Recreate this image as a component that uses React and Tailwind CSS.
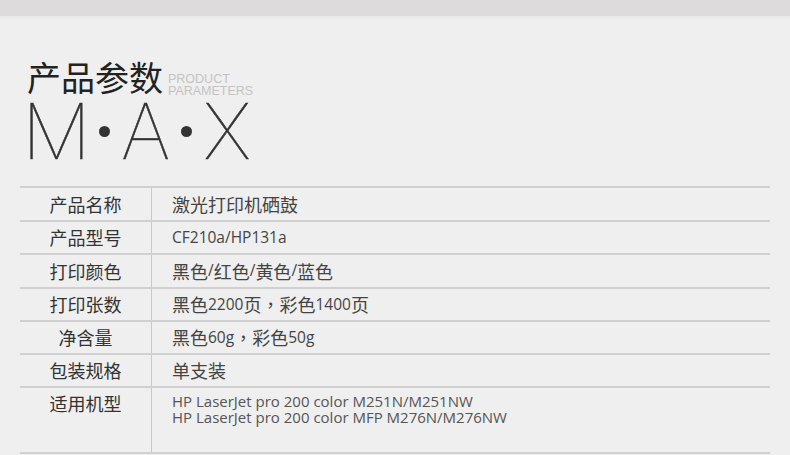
const rows = [
  { label: "产品名称", value: "激光打印机硒鼓", h: "h-[34px]" },
  { label: "产品型号", value: "CF210a/HP131a", h: "h-[33px]" },
  { label: "打印颜色", value: "黑色/红色/黄色/蓝色", h: "h-[34px]" },
  { label: "打印张数", value: "黑色2200页，彩色1400页", h: "h-[33px]" },
  { label: "净含量", value: "黑色60g，彩色50g", h: "h-[33px]" },
  { label: "包装规格", value: "单支装", h: "h-[33px]" },
];

const cjk = "font-['Noto_Sans_CJK_SC',sans-serif]";

// latin runs in the value column are set smaller, like the original page font
function Value({ text }) {
  const parts = text.split(/([A-Za-z0-9/]+|，)/).filter(Boolean);
  return parts.map((p, i) => {
    if (p === "，")
      return (
        <span key={i} className="font-['Noto_Sans_CJK_TC',sans-serif]">
          {p}
        </span>
      );
    if (/^[A-Za-z0-9/]+$/.test(p))
      return (
        <span key={i} className="font-['Open_Sans',sans-serif] text-[15.5px]">
          {p}
        </span>
      );
    return <span key={i}>{p}</span>;
  });
}

export default function App() {
  return (
    <div className="w-[790px] h-[455px] overflow-hidden bg-[#efefef]">
      <div className="h-4 bg-[#dddbdc]" />
      <div className="h-[6px] bg-gradient-to-b from-[#e9e8e8] to-[#efefef]" />

      <div className="pl-[27px] pt-[38px]">
        <div className="flex items-end gap-[5px]">
          <h1 className={`${cjk} text-[34px] leading-none font-normal text-[#222]`}>
            产品参数
          </h1>
          <div className="mb-[-3px] font-['Liberation_Sans',sans-serif] text-[12.5px] leading-[12px] text-[#c3c3c3]">
            <div>PRODUCT</div>
            <div>PARAMETERS</div>
          </div>
        </div>

        <div className="ml-[-5px] mt-[-1px] flex items-center font-['Inter',sans-serif] font-thin text-[77px] leading-none text-[#333] [-webkit-text-stroke:0.5px_#333]">
          <span>M</span>
          <span className="ml-[8px] mr-[11px] block w-[11px] h-[11px] rounded-full bg-[#333]" />
          <span>A</span>
          <span className="ml-[11px] mr-[11px] block w-[11px] h-[11px] rounded-full bg-[#333]" />
          <span>X</span>
        </div>
      </div>

      <div className={`mx-[20px] mt-[16px] ${cjk}`}>
        {rows.map((r) => (
          <div key={r.label} className={`${r.h} flex border-t-2 border-[#d0d0d0]`}>
            <div className="w-[132px] flex items-center justify-center border-r border-[#c9c9c9] text-[18px] text-[#333]">
              {r.label}
            </div>
            <div className="flex items-center pl-[20px] text-[18px] text-[#444]">
              <Value text={r.value} />
            </div>
          </div>
        ))}
        <div className="h-[68px] flex border-y-2 border-[#d0d0d0]">
          <div className="w-[132px] pt-[2px] text-center border-r border-[#c9c9c9] text-[18px] leading-[26px] text-[#333]">
            适用机型
          </div>
          <div className="pl-[20px] pt-[5px] font-['Open_Sans',sans-serif] text-[15px] leading-[16px] text-[#555]">
            <div>HP LaserJet pro 200 color M251N/M251NW</div>
            <div>HP LaserJet pro 200 color MFP M276N/M276NW</div>
          </div>
        </div>
      </div>
    </div>
  );
}
